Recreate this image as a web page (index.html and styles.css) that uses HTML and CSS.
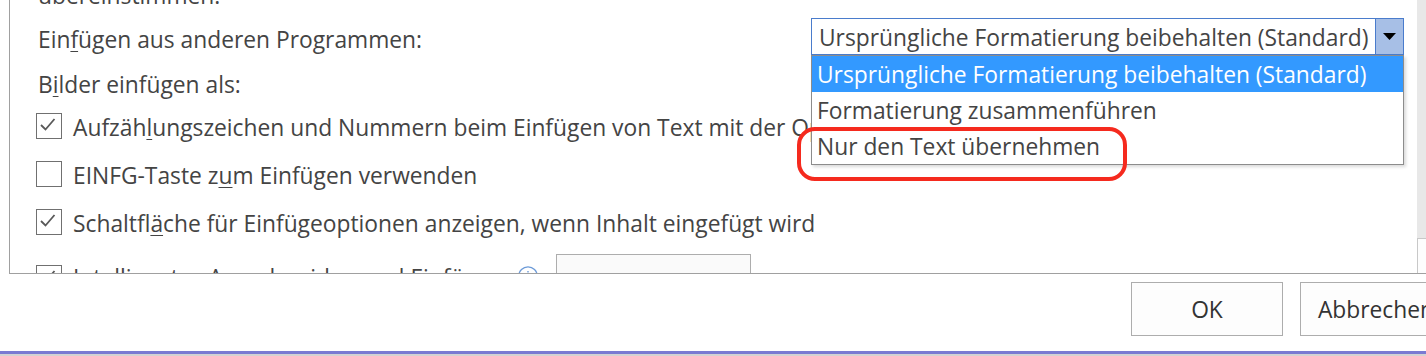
FILE: index.html
```
<!DOCTYPE html>
<html lang="de">
<head>
    <meta charset="UTF-8">
    <title>Optionen - Erweitert</title>
    <link rel="stylesheet" href="styles.css">
</head>
<body>
    <div class="dialog">
        <div class="panel">
            <div class="panel-body">
                <div class="scroll-inner">
                    <div class="line">übereinstimmen.</div>

                    <div class="row-paste">
                        <span class="line paste-label">Ein<u>f</u>ügen aus anderen Programmen:</span>
                        <div class="combo">
                            <div class="combo-box">
                                <span class="combo-value">Ursprüngliche Formatierung beibehalten (Standard)</span>
                                <span class="combo-btn">
                                    <svg width="13" height="7" viewBox="0 0 13 7"><polygon points="0,0 13,0 6.5,7" fill="#000"/></svg>
                                </span>
                            </div>
                            <ul class="combo-list">
                                <li class="selected">Ursprüngliche Formatierung beibehalten (Standard)</li>
                                <li>Formatierung zusammenführen</li>
                                <li>Nur den Text übernehmen</li>
                            </ul>
                            <div class="mark"></div>
                        </div>
                    </div>

                    <div class="line row-images">B<u>i</u>lder einfügen als:</div>

                    <div class="check-row first">
                        <span class="box checked">
                            <svg width="24" height="24" viewBox="0 0 24 24"><path d="M4 11 L8.5 15.5 L17.5 5" fill="none" stroke="#595959" stroke-width="1.8"/></svg>
                        </span>
                        <span>Aufzäh<u>l</u>ungszeichen und Nummern beim Einfügen von Text mit der Option „Nur den Text übernehmen“ beibehalten</span>
                    </div>
                    <div class="check-row">
                        <span class="box"></span>
                        <span>EINFG-Taste z<u>u</u>m Einfügen verwenden</span>
                    </div>
                    <div class="check-row">
                        <span class="box checked">
                            <svg width="24" height="24" viewBox="0 0 24 24"><path d="M4 11 L8.5 15.5 L17.5 5" fill="none" stroke="#595959" stroke-width="1.8"/></svg>
                        </span>
                        <span>Schaltfl<u>ä</u>che für Einfügeoptionen anzeigen, wenn Inhalt eingefügt wird</span>
                    </div>

                    <div class="row-smart">
                        <div class="check-row flat">
                            <span class="box checked">
                                <svg width="24" height="24" viewBox="0 0 24 24"><path d="M4 11 L8.5 15.5 L17.5 5" fill="none" stroke="#595959" stroke-width="1.8"/></svg>
                            </span>
                            <span>Intelligentes Ausschneiden und Einfügen</span>
                        </div>
                        <span class="info">
                            <svg width="20" height="20" viewBox="0 0 20 20"><circle cx="10" cy="10" r="9.2" fill="none" stroke="#6d9bd8" stroke-width="1.3"/><rect x="9.3" y="8" width="1.4" height="6.5" fill="#6d9bd8"/><rect x="9.3" y="5" width="1.4" height="1.5" fill="#6d9bd8"/></svg>
                        </span>
                        <button class="settings-btn">Einstellungen...</button>
                    </div>
                </div>
            </div>
            <div class="scrollbar">
                <div class="scroll-btn"></div>
            </div>
        </div>

        <div class="footer">
            <button class="dlg-btn">OK</button>
            <button class="dlg-btn">Abbrechen</button>
        </div>
    </div>
    <div class="taskbar"></div>
</body>
</html>
```

FILE: styles.css
```
body {
    margin: 0;
    font-family: "Open Sans", "Noto Sans", sans-serif;
    font-size: 22.8px;
    color: #444;
    background-color: #fff;
    overflow: hidden;
}
u {
    text-decoration-thickness: 1px;
    text-underline-offset: 3px;
}
.dialog {
    height: 351px;
    display: flex;
    flex-direction: column;
}
.panel {
    height: 273px;
    margin-left: 9px;
    border-left: 1px solid #a0a0a0;
    border-bottom: 1px solid #a0a0a0;
    display: flex;
}
.panel-body {
    flex: 1;
    overflow: hidden;
    padding: 0 13px 0 26px;
}
.scroll-inner {
    margin-top: -19px;
    display: flex;
    flex-direction: column;
}
.line {
    height: 30px;
    line-height: 30px;
    padding-left: 2px;
    white-space: nowrap;
}

/* paste from other programs + combo */
.row-paste {
    margin-top: 7px;
    height: 37px;
    display: flex;
    align-items: flex-start;
}
.paste-label {
    margin-top: 7px;
}
.combo {
    margin-left: auto;
    position: relative;
    width: 593px;
}
.combo-box {
    height: 37px;
    box-sizing: border-box;
    border: 1px solid #4a7ccc;
    display: flex;
    background-color: #fff;
}
.combo-value {
    flex: 1;
    padding: 3px 0 0 7px;
    line-height: 32px;
    white-space: nowrap;
}
.combo-btn {
    width: 28px;
    box-sizing: border-box;
    border-left: 1px solid #4a7ccc;
    background-color: #a7bfe6;
    display: flex;
    align-items: center;
    justify-content: center;
}
.combo-list {
    position: absolute;
    top: 37px;
    left: 0;
    right: 0;
    margin: 0;
    padding: 0;
    list-style: none;
    background-color: #fff;
    border: 1px solid #8c8c8c;
    box-shadow: 2px 2px 3px rgba(0, 0, 0, 0.15);
    z-index: 2;
}
.combo-list li {
    height: 36px;
    box-sizing: border-box;
    padding: 2px 0 0 5px;
    line-height: 34px;
    white-space: nowrap;
}
.combo-list li.selected {
    background-color: #3399ff;
    color: #fff;
}
.mark {
    position: absolute;
    left: -14px;
    top: 109px;
    width: 330px;
    height: 54px;
    box-sizing: border-box;
    border: 4px solid #f52a1e;
    border-radius: 18px;
    z-index: 3;
}

.row-images {
    margin-top: 15px;
}

/* checkboxes */
.check-row {
    display: flex;
    align-items: flex-start;
    gap: 11px;
    height: 30px;
    line-height: 30px;
    white-space: nowrap;
    margin-top: 18px;
}
.check-row.first {
    margin-top: 13px;
}
.check-row.flat {
    margin-top: 0;
}
.box {
    flex: none;
    width: 26px;
    height: 26px;
    box-sizing: border-box;
    border: 1px solid #707070;
    background-color: #fff;
}
.box svg {
    display: block;
}

.row-smart {
    margin-top: 15px;
    height: 54px;
    display: flex;
    align-items: flex-start;
}
.row-smart .check-row {
    margin-top: 9px;
}
.row-smart .box {
    margin-top: 2px;
}
.info {
    margin: 12px 0 0 14px;
    display: flex;
}
.settings-btn {
    margin-left: 18px;
    width: 195px;
    height: 54px;
    padding: 10px 0 0;
    border: 1px solid #adadad;
    background-color: #fafafa;
    font: inherit;
    color: #333;
}

.scrollbar {
    width: 9px;
    display: flex;
    flex-direction: column;
    background-color: #e8e8e8;
}
.scroll-btn {
    margin-top: auto;
    height: 34px;
    border-top: 1px solid #c8c8c8;
    border-left: 1px solid #c8c8c8;
    background-color: #fdfdfd;
}

/* footer buttons */
.footer {
    display: flex;
    justify-content: flex-end;
    gap: 17px;
    padding-top: 8px;
    margin-right: -26px;
}
.dlg-btn {
    width: 152px;
    height: 54px;
    border: 1px solid #adadad;
    background-color: #fdfdfd;
    font: inherit;
    color: #333;
    padding: 0;
}
.taskbar {
    height: 3px;
    background-color: #7a7ad2;
    border-bottom: 2px solid #d3d3d3;
}
```
